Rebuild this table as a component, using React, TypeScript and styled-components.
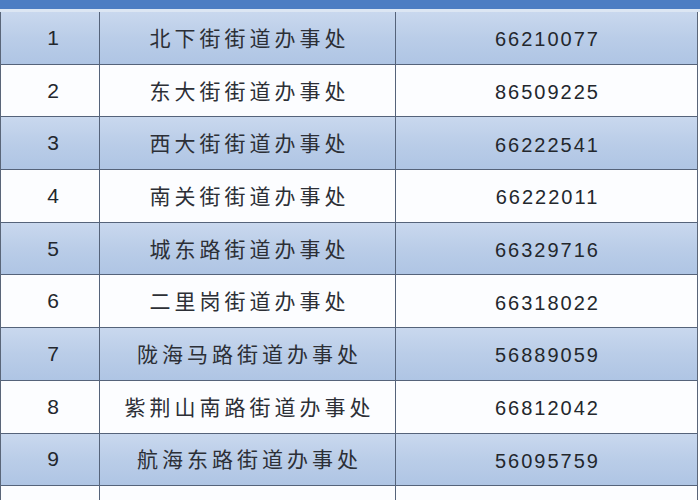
import styled, { createGlobalStyle } from 'styled-components';

const GlobalStyle = createGlobalStyle`
  html, body {
    margin: 0;
    padding: 0;
    background: #ffffff;
    overflow: hidden;
  }
`;

interface Office {
  no: number;
  name: string;
  phone: string;
}

const offices: Office[] = [
  { no: 1, name: '北下街街道办事处', phone: '66210077' },
  { no: 2, name: '东大街街道办事处', phone: '86509225' },
  { no: 3, name: '西大街街道办事处', phone: '66222541' },
  { no: 4, name: '南关街街道办事处', phone: '66222011' },
  { no: 5, name: '城东路街道办事处', phone: '66329716' },
  { no: 6, name: '二里岗街道办事处', phone: '66318022' },
  { no: 7, name: '陇海马路街道办事处', phone: '56889059' },
  { no: 8, name: '紫荆山南路街道办事处', phone: '66812042' },
  { no: 9, name: '航海东路街道办事处', phone: '56095759' },
  { no: 10, name: '金岱街道办事处', phone: '66911203' },
];

const App = () => {
  return (
    <>
      <GlobalStyle />
      <Page>
        <HeaderBand />
        <Table>
          {offices.map((office, i) => (
            <Row key={office.no} shaded={i % 2 === 0}>
              <NoCell>{office.no}</NoCell>
              <NameCell>{office.name}</NameCell>
              <PhoneCell>{office.phone}</PhoneCell>
            </Row>
          ))}
        </Table>
      </Page>
    </>
  );
};

export default App;

const Page = styled.div`
  width: 700px;
  height: 500px;
  overflow: hidden;
  background: #ffffff;
`;

const HeaderBand = styled.div`
  height: 9px;
  background: #4d7dc3;
  border-bottom: 3px solid #dce6f3;
`;

const Table = styled.div`
  width: 698px;
  display: flex;
  flex-direction: column;
  border-left: 1.5px solid #5a6679;
  border-right: 1.5px solid #5a6679;
  box-sizing: border-box;
`;

const Row = styled.div<{ shaded: boolean }>`
  display: grid;
  grid-template-columns: 99px 296px 1fr;
  height: 52.7px;
  flex-shrink: 0;
  box-sizing: border-box;
  border-bottom: 1.5px solid #55637a;
  background: ${(props) =>
    props.shaded
      ? 'linear-gradient(180deg, #c9d8ee 0%, #bacde8 50%, #afc5e4 100%)'
      : '#fcfdff'};
`;

const Cell = styled.div`
  display: flex;
  align-items: center;
  justify-content: center;
  color: #23272d;
  border-right: 1.5px solid #55637a;
  box-sizing: border-box;
  &:last-child {
    border-right: none;
  }
`;

const NoCell = styled(Cell)`
  font-family: 'Liberation Sans', Arial, sans-serif;
  font-size: 21px;
  padding-left: 6px;
`;

const NameCell = styled(Cell)`
  font-family: 'Noto Sans CJK SC', 'Noto Sans', sans-serif;
  font-size: 21px;
  font-weight: 400;
  letter-spacing: 4px;
  padding-left: 4px;
  padding-bottom: 2px;
  color: #2c2f36;
`;

const PhoneCell = styled(Cell)`
  font-family: 'Liberation Sans', Arial, sans-serif;
  font-size: 20px;
  letter-spacing: 2px;
  padding-top: 4px;
  padding-left: 2px;
`;
